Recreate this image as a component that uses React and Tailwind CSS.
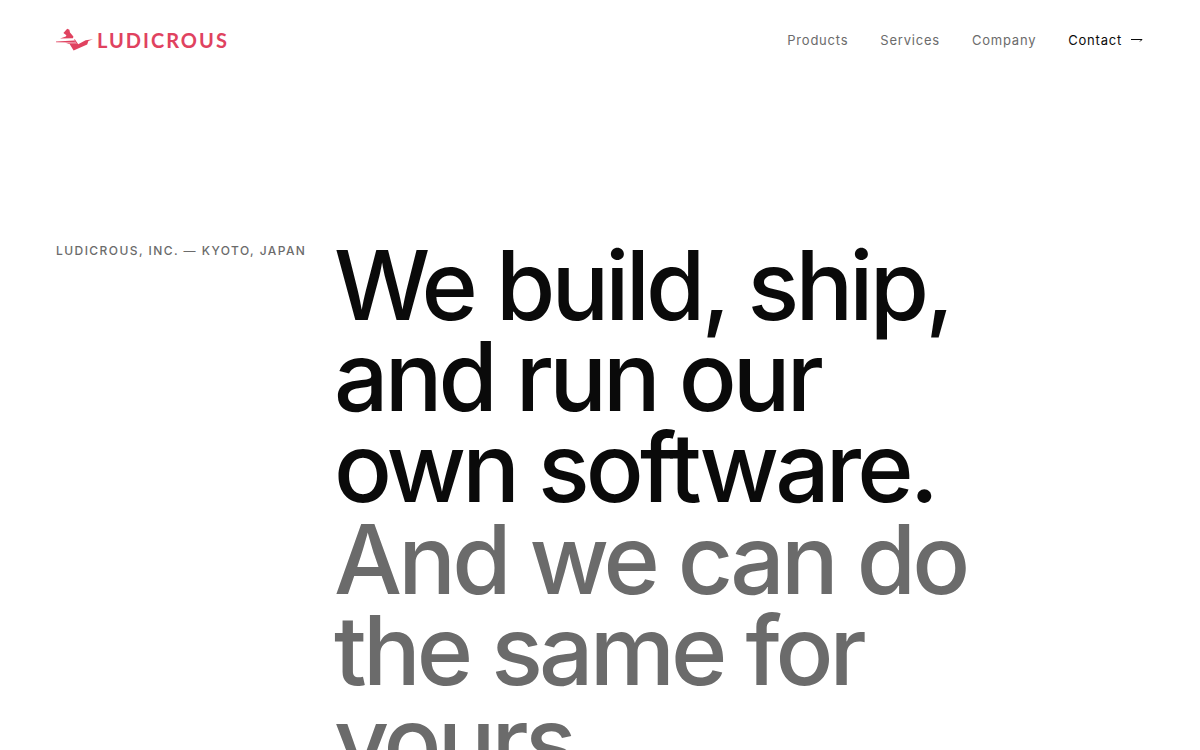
import React from 'react'

const links = [
  { label: 'Products', href: '#products' },
  { label: 'Services', href: '#services' },
  { label: 'Company', href: '#company' },
]

function Logo() {
  return (
    <a href="#home" className="flex items-center gap-1 text-[#e0425f]">
      <svg viewBox="0 0 37 24" className="h-6 w-[37px]" fill="currentColor" aria-hidden="true">
        <path d="M11.2 0.8 L13.4 1.8 L14 4.4 L17.4 8.4 L17 10.2 L4 10.6 L9.8 8.6 L10.4 7.2 L7.4 5 Z" />
        <path d="M0 13.4 L18.2 12.4 L19.6 14.4 L0 14.2 Z" />
        <path d="M9.4 14.8 L19.8 14.8 L20.4 15.8 L12.8 15.8 Z" />
        <path d="M17.8 11.6 L19 11.6 L22.2 16.2 L29.6 12.2 L37 11.2 L32.4 13 L31.2 16.4 L17.6 22.6 L13.6 16 L20.6 16 Z" />
      </svg>
      <span className="font-['Lato',sans-serif] text-xl leading-[22px] font-bold tracking-widest">LUDICROUS</span>
    </a>
  )
}

function Header() {
  return (
    <header className="flex h-20 items-center justify-between px-14">
      <Logo />
      <nav className="flex items-center gap-8 text-[13px] leading-[22px] tracking-[0.06em] text-[#6b6b6b]">
        {links.map((link) => (
          <a key={link.label} href={link.href}>
            {link.label}
          </a>
        ))}
        <a href="#contact" className="flex items-center gap-2 text-[#0a0a0a]">
          Contact
          <svg viewBox="0 0 14 8" className="h-2 w-[14px]" fill="none" stroke="currentColor" aria-hidden="true">
            <path d="M1 3.5 H12 L10 5.5" />
          </svg>
        </a>
      </nav>
    </header>
  )
}

function Hero() {
  return (
    <section className="grid grid-cols-12 gap-6 px-14 pt-40 pb-20">
      <p className="col-span-3 pt-[3px] text-xs font-medium tracking-[0.12em] whitespace-nowrap text-[#6b6b6b] uppercase">
        Ludicrous, Inc. — Kyoto, Japan
      </p>
      <h1 className="col-span-9 max-w-[680px] text-8xl leading-[0.95] font-medium tracking-[-0.04em] text-[#0a0a0a]">
        We build, ship, and run our own software.
        <span className="block text-[#6b6b6b]">And we can do the same for yours.</span>
      </h1>
    </section>
  )
}

function App() {
  return (
    <div className="min-h-screen bg-white font-['Inter',sans-serif]">
      <Header />
      <main>
        <Hero />
      </main>
    </div>
  )
}

export default App
